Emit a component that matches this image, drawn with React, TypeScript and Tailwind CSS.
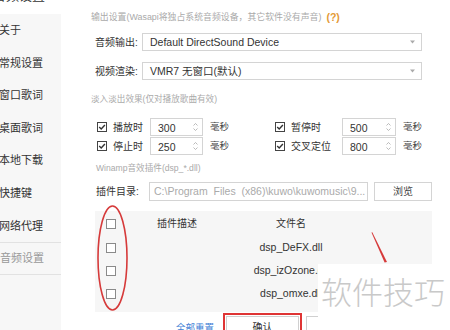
import React from 'react';

const NAV = ['关于', '常规设置', '窗口歌词', '桌面歌词', '本地下载', '快捷键', '网络代理'];

const FILES = ['dsp_DeFX.dll', 'dsp_izOzone.dll', 'dsp_omxe.dll'];

function CheckBox({ checked = false }: { checked?: boolean }) {
  return (
    <svg width="10" height="10" viewBox="0 0 10 10" className="shrink-0">
      <rect x="0.5" y="0.5" width="9" height="9" fill="#fff" stroke={checked ? '#444' : '#8a8a8a'} />
      {checked && <path d="M2.2 5.1 L4.2 7 L7.9 3" fill="none" stroke="#333" strokeWidth="1.4" />}
    </svg>
  );
}

function Spinner({ value, w }: { value: string; w: string }) {
  return (
    <div className={`${w} h-[18px] shrink-0 border border-[#d4d4d4] bg-white flex items-center justify-between pl-[7px] pr-[4px]`}>
      <span className="text-[10.5px] text-[#333] leading-none mt-[2px]">{value}</span>
      <svg width="5" height="10" viewBox="0 0 5 10">
        <path d="M0.5 3.5 L2.5 1.5 L4.5 3.5" fill="none" stroke="#aaa" strokeWidth="0.8" />
        <path d="M0.5 6.5 L2.5 8.5 L4.5 6.5" fill="none" stroke="#aaa" strokeWidth="0.8" />
      </svg>
    </div>
  );
}

function Select({ value }: { value: string }) {
  return (
    <div className="w-[280px] h-[18px] shrink-0 border border-[#d4d4d4] bg-white flex items-center justify-between pl-[7px] pr-[6px]">
      <span className="text-[10.5px] text-[#333] leading-none whitespace-nowrap">{value}</span>
      <svg width="5" height="4" viewBox="0 0 5 4">
        <path d="M0 0.5 L5 0.5 L2.5 3.5 Z" fill="#aaa" />
      </svg>
    </div>
  );
}

function FadeGroup({ label, value, labelW, inputW, width }: { label: string; value: string; labelW: string; inputW: string; width?: string }) {
  return (
    <div className={`flex items-center shrink-0 ${width ?? ''}`}>
      <CheckBox checked />
      <span className={`ml-[6px] ${labelW} shrink-0 text-[10px] text-[#333] whitespace-nowrap`}>{label}</span>
      <Spinner value={value} w={inputW} />
      <span className="ml-[7px] text-[9.5px] text-[#444] whitespace-nowrap">毫秒</span>
    </div>
  );
}

export default function App() {
  return (
    <div className="relative w-[450px] h-[330px] overflow-hidden bg-white flex font-['Liberation_Sans','Noto_Sans_CJK_SC',sans-serif]">
      {/* Sidebar */}
      <div className="w-[61px] shrink-0 flex flex-col">
        <div className="h-[14px] overflow-hidden">
          <p className="-mt-[12px] -ml-[7px] text-[13px] leading-[16px] text-[#333] whitespace-nowrap">音频设置</p>
        </div>
        <div className="flex-1 bg-[#f7f7f7] flex flex-col">
          {NAV.map((n) => (
            <div key={n} className="h-[32.6px] flex items-center -ml-[1px] text-[11px] text-[#333] whitespace-nowrap">
              {n}
            </div>
          ))}
          <div className="h-[33px] border-y border-[#e2e2e2] flex items-center text-[11px] text-[#999] whitespace-nowrap">
            音频设置
          </div>
        </div>
      </div>

      {/* Main */}
      <div className="flex-1 min-w-0 pl-[30px] pt-[11px] flex flex-col">
        <div className="h-[14px] shrink-0 flex items-center text-[8.9px] text-[#aaa] whitespace-nowrap">
          输出设置(Wasapi将独占系统音频设备，其它软件没有声音)
          <span className="ml-[5px] text-[10.5px] font-bold text-[#e39a36]">(?)</span>
        </div>

        <div className="mt-[8px] h-[18px] shrink-0 flex items-center pl-[4px]">
          <span className="w-[47px] shrink-0 text-[10px] text-[#333] whitespace-nowrap">音频输出:</span>
          <Select value="Default DirectSound Device" />
        </div>
        <div className="mt-[11px] h-[18px] shrink-0 flex items-center pl-[4px]">
          <span className="w-[47px] shrink-0 text-[10px] text-[#333] whitespace-nowrap">视频渲染:</span>
          <Select value="VMR7 无窗口(默认)" />
        </div>

        <div className="mt-[12px] h-[14px] shrink-0 flex items-center text-[8.6px] text-[#aaa] whitespace-nowrap">淡入淡出效果(仅对播放歌曲有效)</div>

        <div className="mt-[12px] h-[18px] shrink-0 flex items-center pl-[6px]">
          <FadeGroup label="播放时" value="300" labelW="w-[37px]" inputW="w-[53px]" width="w-[178px]" />
          <FadeGroup label="暂停时" value="500" labelW="w-[51px]" inputW="w-[54px]" />
        </div>
        <div className="mt-[1px] h-[18px] shrink-0 flex items-center pl-[6px]">
          <FadeGroup label="停止时" value="250" labelW="w-[37px]" inputW="w-[53px]" width="w-[178px]" />
          <FadeGroup label="交叉定位" value="800" labelW="w-[51px]" inputW="w-[54px]" />
        </div>

        <div className="mt-[6px] h-[14px] shrink-0 flex items-center pl-[5px] text-[8.6px] text-[#aaa] whitespace-nowrap">Winamp音效插件(dsp_*.dll)</div>

        <div className="mt-[7px] h-[19px] shrink-0 flex items-center pl-[5px]">
          <span className="w-[53px] shrink-0 text-[10px] text-[#333] whitespace-nowrap">插件目录:</span>
          <div className="w-[219px] h-[19px] shrink-0 border border-[#d4d4d4] bg-white flex items-center pl-[4px] text-[10.5px] text-[#aaa] whitespace-pre overflow-hidden">
            {'C:\\Program  Files  (x86)\\kuwo\\kuwomusic\\9...'}
          </div>
          <div className="ml-[6px] w-[58px] h-[19px] shrink-0 border border-[#d4d4d4] bg-white flex items-center justify-center text-[10px] text-[#444]">
            浏览
          </div>
        </div>

        {/* Plugin table */}
        <div className="mt-[10px] ml-[4px] w-[337px] shrink-0 bg-[#f6f6f6] pb-[7px] flex flex-col">
          <div className="h-[25px] flex items-center text-[10px] text-[#333]">
            <div className="w-[61px] pl-[11px]"><CheckBox /></div>
            <div className="w-[94px] pl-[1px] whitespace-nowrap">插件描述</div>
            <div className="w-[82px] text-center whitespace-nowrap">文件名</div>
          </div>
          {FILES.map((f) => (
            <div key={f} className="h-[23px] flex items-center text-[10.5px] text-[#333]">
              <div className="w-[61px] pl-[11px]"><CheckBox /></div>
              <div className="w-[94px]" />
              <div className="w-[82px] text-center whitespace-nowrap">{f}</div>
            </div>
          ))}
        </div>

        {/* Bottom buttons */}
        <div className="mt-[1px] shrink-0 flex items-start">
          <span className="ml-[85px] mt-[8px] text-[9.5px] text-[#3f7fd6] whitespace-nowrap">全部重置</span>
          <div className="ml-[9px] border-2 border-[#df3434] p-[1px] pb-0">
            <div className="w-[73px] h-[22px] border border-[#d0d0d0] bg-white flex items-center justify-center text-[10px] text-[#333]">
              确认
            </div>
          </div>
          <div className="ml-[4px] mt-[3px] w-[60px] h-[22px] border border-[#d0d0d0] bg-white" />
        </div>
      </div>

      {/* Annotation overlay */}
      <svg className="absolute left-0 top-0 pointer-events-none" width="450" height="330" viewBox="0 0 450 330">
        <ellipse cx="112.5" cy="258" rx="14.5" ry="52" fill="none" stroke="#d63a3a" strokeWidth="1.6" />
        <path d="M371.5 232.5 L372.3 232.2 L387 262 L384.6 262.6 Z" fill="#d63a3a" />
      </svg>

      {/* Watermark */}
      <div className="absolute left-[318px] top-[264px] w-[132px] h-[66px] bg-white flex items-start pl-[3px] pt-[7px]">
        <span className="text-[31px] leading-[40px] text-[#c9c9c9] font-light whitespace-nowrap font-['Noto_Sans_CJK_SC',sans-serif]">软件技巧</span>
      </div>
    </div>
  );
}
